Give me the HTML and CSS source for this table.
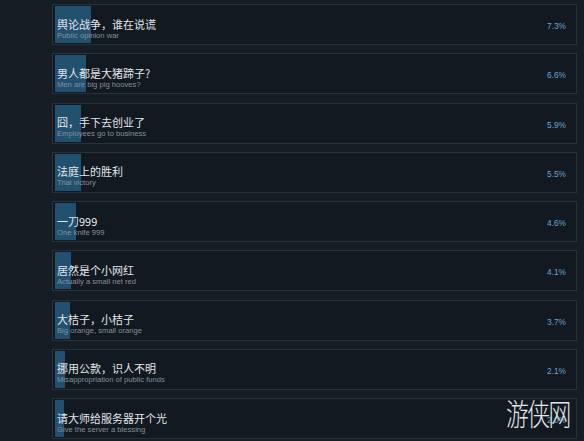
FILE: index.html
```html
<!DOCTYPE html>
<html>

<head>
    <title>Endings</title>
    <meta name="viewport" content="width=device-width, initial-scale=1.0">
    <link rel="stylesheet" href="styles.css">
</head>

<body>
    <div class="list">
        <div class="row">
            <div class="bar" style="width: 36px"></div>
            <div class="label">
                <p class="title">舆论战争，谁在说谎</p>
                <p class="sub">Public opinion war</p>
            </div>
            <span class="pct">7.3%</span>
        </div>
        <div class="row">
            <div class="bar" style="width: 31px"></div>
            <div class="label">
                <p class="title">男人都是大猪蹄子?</p>
                <p class="sub">Men are big pig hooves?</p>
            </div>
            <span class="pct">6.6%</span>
        </div>
        <div class="row">
            <div class="bar" style="width: 26px"></div>
            <div class="label">
                <p class="title">囧，手下去创业了</p>
                <p class="sub">Employees go to business</p>
            </div>
            <span class="pct">5.9%</span>
        </div>
        <div class="row">
            <div class="bar" style="width: 26px"></div>
            <div class="label">
                <p class="title">法庭上的胜利</p>
                <p class="sub">Trial victory</p>
            </div>
            <span class="pct">5.5%</span>
        </div>
        <div class="row">
            <div class="bar" style="width: 21px"></div>
            <div class="label">
                <p class="title">一刀999</p>
                <p class="sub">One knife 999</p>
            </div>
            <span class="pct">4.6%</span>
        </div>
        <div class="row">
            <div class="bar" style="width: 16px"></div>
            <div class="label">
                <p class="title">居然是个小网红</p>
                <p class="sub">Actually a small net red</p>
            </div>
            <span class="pct">4.1%</span>
        </div>
        <div class="row">
            <div class="bar" style="width: 15px"></div>
            <div class="label">
                <p class="title">大桔子，小桔子</p>
                <p class="sub">Big orange, small orange</p>
            </div>
            <span class="pct">3.7%</span>
        </div>
        <div class="row">
            <div class="bar" style="width: 10px"></div>
            <div class="label">
                <p class="title">挪用公款，识人不明</p>
                <p class="sub">Misappropriation of public funds</p>
            </div>
            <span class="pct">2.1%</span>
        </div>
        <div class="row">
            <div class="bar" style="width: 9px"></div>
            <div class="label">
                <p class="title">请大师给服务器开个光</p>
                <p class="sub">Give the server a blessing</p>
            </div>
            <span class="pct">2.0%</span>
        </div>
    </div>

    <!-- site watermark -->
    <div class="watermark">游侠网</div>
</body>

</html>
```

FILE: styles.css
```css
body {
    margin: 0;
    padding: 0;
    background-color: #161d25;
    font-family: "Liberation Sans", Arial, sans-serif;
    height: 441px;
    overflow: hidden;
    position: relative;
}

.list {
    display: grid;
    row-gap: 8.25px;
    padding: 4px 7px 0 52px;
}

.row {
    position: relative;
    height: 39px;
    border: 1px solid #28323d;
    background-color: #121920;
    display: flex;
    align-items: center;
    justify-content: space-between;
}

.bar {
    position: absolute;
    left: 2px;
    top: 1px;
    bottom: 1px;
    background-color: #22506f;
}

.label {
    position: relative;
    padding: 9px 0 0 4px;
}

.title {
    margin: 0;
    font-family: "Noto Sans CJK SC", "Noto Sans", sans-serif;
    font-size: 11px;
    line-height: 13px;
    color: #e2e6ea;
}

.sub {
    margin: 0;
    font-size: 7.65px;
    line-height: 10px;
    color: #85909a;
}

.pct {
    position: relative;
    font-size: 8.3px;
    color: #68a6d6;
    margin: 3px 10px 0 0;
}

.watermark {
    position: absolute;
    left: 506px;
    top: 392px;
    white-space: nowrap;
    font-family: "Noto Sans CJK SC", sans-serif;
    font-size: 30px;
    line-height: 40px;
    font-weight: 300;
    letter-spacing: -2px;
    color: #e4e8ec;
    transform: scaleX(0.76);
    transform-origin: left top;
}
```
